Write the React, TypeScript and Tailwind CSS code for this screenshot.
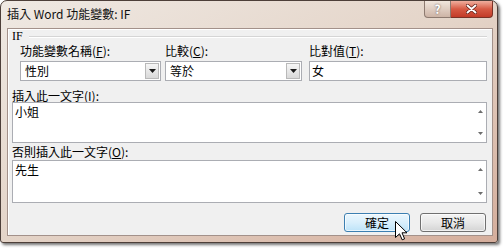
import React from "react";

// 插入 Word 功能變數: IF 對話方塊

function Label({ text, mk }: { text: string; mk: string }) {
  return (
    <span className="whitespace-nowrap">
      {text}(<u>{mk}</u>):
    </span>
  );
}

function Combo({ value, className }: { value: string; className: string }) {
  return (
    <div className={`flex h-[20px] items-center border border-[#abadb3] bg-white ${className}`}>
      <span className="flex-1 pl-[4px] leading-[14px]">{value}</span>
      <div className="mr-[1px] flex h-[16px] w-[14px] items-center justify-center border border-[#b9b9b9] bg-linear-to-b from-[#f6f6f6] to-[#d9d9d9]">
        <svg width="7" height="4" viewBox="0 0 7 4">
          <path d="M0 0h7L3.5 4z" fill="#1a1a1a" />
        </svg>
      </div>
    </div>
  );
}

function Memo({ value, className }: { value: string; className: string }) {
  return (
    <div className={`flex border border-[#abadb3] bg-white ${className}`}>
      <div className="flex-1 pl-[2px] pt-[2px] leading-[14px]">{value}</div>
      <div className="flex w-[12px] flex-col items-center justify-between py-[7px]">
        <svg width="5" height="3" viewBox="0 0 5 3">
          <path d="M0 3h5L2.5 0z" fill="#6d6d6d" />
        </svg>
        <svg width="5" height="3" viewBox="0 0 5 3">
          <path d="M0 0h5L2.5 3z" fill="#6d6d6d" />
        </svg>
      </div>
    </div>
  );
}

export default function App() {
  return (
    <div className="relative h-[249px] w-[504px] bg-white text-[12px] text-black font-['Noto_Sans_CJK_TC','Noto_Sans',sans-serif]">
      {/* window frame */}
      <div className="flex h-[243px] w-[498px] flex-col rounded-t-[7px] rounded-b-[3px] border border-[#4d3f39] bg-linear-to-br from-[#efe9e3] via-[#e4d4c8] to-[#d5ae9c] pb-[6px] pl-[6px] pr-[4px] shadow-[2px_2px_3px_rgba(0,0,0,0.55)]">
        {/* title bar */}
        <div className="flex h-[27px] items-start justify-between">
          <span className="mt-[6px] leading-[14px] text-[#111]">插入 Word 功能變數: IF</span>
          <div className="flex">
            <div className="flex h-[17px] w-[27px] items-center justify-center rounded-bl-[4px] border border-t-0 border-[#8d7a70] bg-linear-to-b from-[#f1e6dd] to-[#cdb4a6] text-[12px] font-bold leading-none text-white [text-shadow:0_0_2px_#5a4a44]">
              ?
            </div>
            <div className="flex h-[17px] w-[42px] items-center justify-center rounded-br-[4px] border border-l-0 border-t-0 border-[#7a3226] bg-linear-to-b from-[#eeae9e] via-[#d65a44] to-[#c23b28]">
              <svg width="11" height="10" viewBox="0 0 11 10">
                <path d="M1.5 1.5l8 7M9.5 1.5l-8 7" stroke="#5a1a12" strokeWidth="3.4" strokeLinecap="round" />
                <path d="M1.5 1.5l8 7M9.5 1.5l-8 7" stroke="#ffffff" strokeWidth="2" strokeLinecap="round" />
              </svg>
            </div>
          </div>
        </div>

        {/* client area */}
        <div className="flex flex-1 flex-col border border-[#a3918a] bg-[#f0f0f0] pb-[3px] pl-[4px] pr-[5px] shadow-[inset_1px_1px_0_#ffffff]">
          <div className="flex h-[14px] items-center">
            <span className="font-['Liberation_Serif',serif] leading-[14px]">IF</span>
            <div className="ml-[6px] mt-[2px] flex-1 border-t border-b border-t-[#d5d5d5] border-b-white" />
          </div>

          <div className="flex h-[16px] items-center pl-[8px] leading-[14px]">
            <div className="w-[145px]">
              <Label text="功能變數名稱" mk="F" />
            </div>
            <div className="w-[144px]">
              <Label text="比較" mk="C" />
            </div>
            <div className="flex-1">
              <Label text="比對值" mk="T" />
            </div>
          </div>

          <div className="mt-[2px] flex pl-[8px]">
            <Combo value="性別" className="w-[141px]" />
            <Combo value="等於" className="ml-[4px] w-[137px]" />
            <div className="ml-[7px] flex h-[20px] flex-1 items-center border border-[#abadb3] bg-white pl-[2px] leading-[14px]">
              女
            </div>
          </div>

          <div className="mt-[8px] h-[13px] leading-[13px]">
            <Label text="插入此一文字" mk="I" />
          </div>
          <Memo value="小姐" className="h-[41px]" />

          <div className="flex h-[17px] items-center leading-[14px]">
            <Label text="否則插入此一文字" mk="O" />
          </div>
          <Memo value="先生" className="h-[43px]" />

          <div className="mt-[10px] flex justify-end gap-[10px] pr-[1px]">
            <button className="flex h-[19px] w-[66px] items-center justify-center rounded-[3px] border border-[#3c7fb1] bg-linear-to-b from-[#ecf7fd] via-[#d9effc] to-[#bde3f8] leading-none shadow-[inset_0_0_0_1px_#ffffffaa]">
              確定
            </button>
            <button className="flex h-[19px] w-[66px] items-center justify-center rounded-[3px] border border-[#707070] bg-linear-to-b from-[#f4f4f4] via-[#e8e8e8] to-[#d4d4d4] leading-none shadow-[inset_0_0_0_1px_#ffffffaa]">
              取消
            </button>
          </div>
        </div>
      </div>

      {/* mouse pointer */}
      <svg className="absolute left-[395px] top-[221px]" width="13" height="20" viewBox="0 0 13 20">
        <path
          d="M0.5 0.5L0.5 16.5L4.5 12.8L7.2 18.8L9.6 17.8L7 11.8L12 11.8Z"
          fill="#ffffff"
          stroke="#000000"
          strokeWidth="1"
          strokeLinejoin="round"
        />
      </svg>
    </div>
  );
}
